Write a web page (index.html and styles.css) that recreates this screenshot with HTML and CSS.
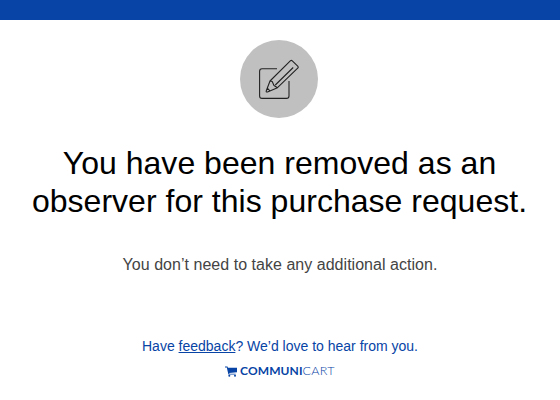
FILE: index.html
```html
<!DOCTYPE html>
<html lang="en">
<head>
<meta charset="utf-8">
<title>Observer removed</title>
<link rel="stylesheet" href="styles.css">
</head>
<body>
<div class="bar"></div>
<main class="message">
  <div class="badge">
    <svg class="edit-icon" viewBox="0 0 40 40" width="40" height="40" aria-hidden="true">
      <path d="M18 9.800H3Q0.600 9.800 0.600 12.200V37Q0.600 39.400 3 39.400H27.500Q30 39.400 30 37V22"/>
      <path d="M31.300 1.800Q32.300 0.800 33.300 1.800L38.700 7.200Q39.700 8.200 38.700 9.200L18.500 28.700L8.500 32.900Q6.800 33.500 7.300 31.800L11 22ZM34.200 8.500L16.300 26M11 22L13.200 22.500L15 26.500L18.500 28.700M8.300 29L10.700 31.600"/>
    </svg>
  </div>
  <h1 class="title">You have been removed as an<br>observer for this purchase request.</h1>
  <p class="note">You don’t need to take any additional action.</p>
</main>
<footer class="footer">
  <p class="feedback">Have <a href="#">feedback</a>? We’d love to hear from you.</p>
  <div class="brand">
    <svg class="cart" viewBox="0 0 12 11" width="12" height="11" aria-hidden="true"><path d="M0 0.500H2.500L2.900 1.800H12V6.200L4.200 7L4.400 7.700H10.700V8.600H3.400L1.800 1.400H0Z"/><circle cx="4.300" cy="9.700" r="1"/><circle cx="10" cy="9.700" r="1"/></svg>
    <span class="wordmark"><b class="strong">COMMUNI</b><span class="light">CART</span></span>
  </div>
</footer>
</body>
</html>
```
FILE: styles.css
```css
body { margin: 0; background: #fff; color: #000; font-family: "Liberation Sans", Arial, sans-serif; text-align: center; }
.bar { height: 20px; background: #0744a5; }
.message { padding-top: 20px; }
.badge { width: 78px; height: 78px; margin: 0 auto 0 240px; border-radius: 50%; background: #c0c0c0; display: flex; align-items: center; justify-content: center; }
.edit-icon { fill: none; stroke: #222; stroke-width: 1.1; stroke-linejoin: round; }
.title { margin: 26px 0 0 -1px; font-size: 32px; line-height: 38px; font-weight: 400; letter-spacing: 0.02px; white-space: nowrap; }
.note { margin: 35px 0 0; font-size: 16px; line-height: 20px; letter-spacing: 0.03px; color: #444; }
.footer { margin-top: 61px; color: #0744a5; }
.feedback { margin: 0; font-size: 14px; line-height: 20px; }
.feedback a { color: inherit; }
.brand { display: flex; justify-content: center; align-items: center; margin-top: 7px; height: 16px; gap: 3px; }
.cart { fill: #0744a5; }
.wordmark { font: 12px/16px "Lato", sans-serif; }
.strong { font-weight: 700; letter-spacing: 0.100px; }
.light { font-weight: 300; font-size: 12.500px; letter-spacing: 0.300px; }
```
